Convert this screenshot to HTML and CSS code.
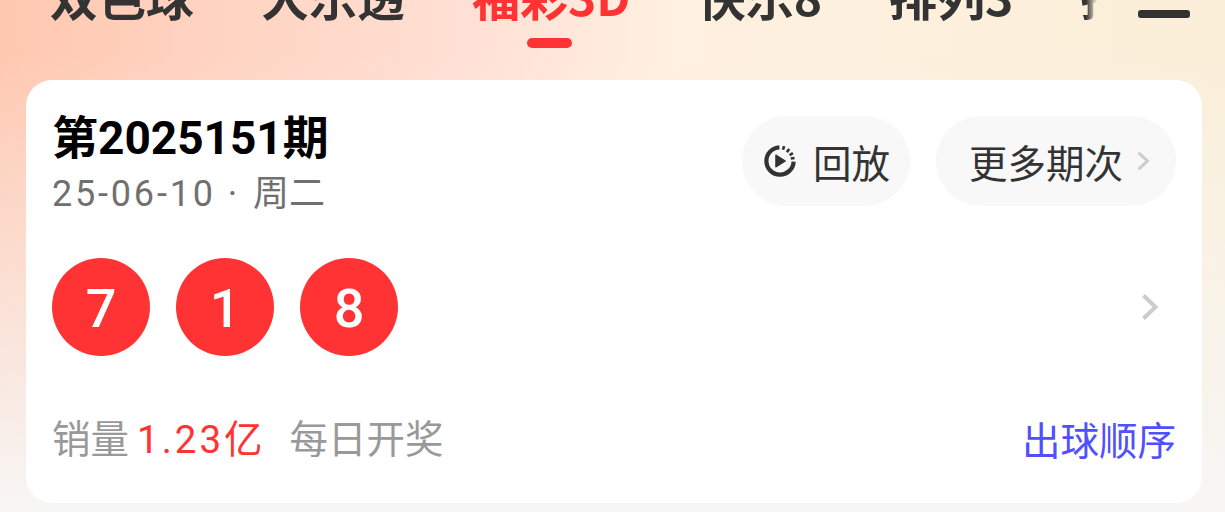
FILE: index.html
```html
<!DOCTYPE html>
<html lang="zh-CN">
<head>
  <meta charset="UTF-8" />
  <title>开奖</title>
  <link rel="stylesheet" href="styles.css">
</head>
<body>
  <div class="top">
    <div class="tabs">
      <span class="tab">双色球</span>
      <span class="tab">大乐透</span>
      <span class="tab active">福彩3D</span>
      <span class="tab">快乐8</span>
      <span class="tab">排列3</span>
      <span class="tab">排列5</span>
    </div>
    <div class="menu"><span class="menu-line"></span></div>
  </div>

  <div class="card">
    <div class="head">
      <div class="info">
        <div class="issue">第2025151期</div>
        <div class="date"><span class="nums">25-06-10</span><span class="dot">·</span>周二</div>
      </div>
      <div class="actions">
        <div class="pill replay">
          <svg class="replay-icon" viewBox="2.500 2.500 27 27" width="32" height="32">
            <path d="M15.500 4.500A11.500 11.500 0 1 0 27.500 16.500" fill="none" stroke="#333" stroke-width="3.600"/>
            <path d="M19.500 3.500l-1 3M23.800 5.800l-2 2.700M26.900 9.400l-2.800 1.600M28.300 13.500l-3.200 .4" fill="none" stroke="#333" stroke-width="2.200"/>
            <path d="M12.500 11l8 5-8 5z" fill="#333" stroke="#333" stroke-width="1" stroke-linejoin="round"/>
          </svg>
          <span>回放</span>
        </div>
        <div class="pill more">
          <span>更多期次</span>
          <svg viewBox="0 0 12 20" width="14" height="22"><path d="M2 2.500l8 7.500-8 7.500" fill="none" stroke="#ccc" stroke-width="2.800"/></svg>
        </div>
      </div>
    </div>

    <div class="balls-row">
      <div class="balls">
        <span class="ball">7</span>
        <span class="ball">1</span>
        <span class="ball">8</span>
      </div>
      <svg class="row-arrow" viewBox="0 0 18 28" width="18" height="28"><path d="M2.500 2.500l12 11.500-12 11.500" fill="none" stroke="#ccc" stroke-width="4"/></svg>
    </div>

    <div class="foot">
      <div class="stats">
        <span>销量<em class="sales"><span class="nums-sales">1.23</span>亿</em></span>
        <span>每日开奖</span>
      </div>
      <span class="order">出球顺序</span>
    </div>
  </div>
</body>
</html>
```

FILE: styles.css
```css
* {
  box-sizing: border-box;
}
html, body {
  height: 100%;
}
body {
  margin: 0;
  overflow: hidden;
  font-family: "Noto Sans CJK SC", "Noto Sans", sans-serif;
  color: #333;
  background:
    linear-gradient(180deg, rgba(247, 246, 245, 0) 0%, rgba(247, 246, 245, 0) 10%, #f7f6f5 100%),
    linear-gradient(90deg, #ffc8b0 0%, #ffe0d4 38%, #fff0e0 55%, #faefd8 100%);
}
.top {
  display: flex;
  justify-content: space-between;
  height: 80px;
  padding: 0 35px 0 50px;
}
.tabs {
  display: flex;
  width: 1047px;
  gap: 67px;
  overflow: hidden;
  height: 80px;
  -webkit-mask-image: linear-gradient(90deg, #000 1036px, transparent 1047px);
}
.tab {
  position: relative;
  flex: none;
  margin-top: -29px;
  font-size: 48px;
  line-height: 48px;
  height: 48px;
  font-weight: 700;
  white-space: nowrap;
}
.tab.active {
  color: #ff3333;
}
.tab.active::after {
  content: "";
  position: absolute;
  left: 55px;
  top: 67px;
  width: 45px;
  height: 10px;
  border-radius: 5px;
  background: #ff3333;
}
.menu {
  padding-top: 10px;
}
.menu-line {
  display: block;
  width: 52px;
  height: 8px;
  border-radius: 3px;
  background: #333;
}
.card {
  display: flex;
  flex-direction: column;
  margin: 0 23px 0 26px;
  height: 423px;
  padding: 30px 26px 0;
  background: #fff;
  border-radius: 26px;
}
.head {
  display: flex;
  justify-content: space-between;
}
.info {
  padding-top: 2px;
}
.issue {
  font-size: 46px;
  line-height: 52px;
  font-weight: 700;
  color: #000;
  font-family: Roboto, "Noto Sans CJK SC", sans-serif;
}
.date {
  margin-top: 8px;
  font-size: 36px;
  line-height: 44px;
  color: #707070;
  font-family: Roboto, "Noto Sans CJK SC", sans-serif;
}
.nums {
  letter-spacing: 2.800px;
}
.dot {
  margin: 0 16px 0 12px;
}
.actions {
  display: flex;
  gap: 26px;
  margin-top: 6px;
}
.pill {
  display: flex;
  align-items: center;
  height: 90px;
  border-radius: 45px;
  background: #f8f8f8;
  font-size: 38.500px;
  color: #333;
}
.replay {
  width: 168px;
  padding-left: 22px;
  gap: 17px;
}
.more {
  width: 240px;
  padding-left: 33px;
  gap: 13px;
}
.balls-row {
  display: flex;
  align-items: center;
  justify-content: space-between;
  margin-top: 42px;
  padding-right: 17px;
}
.balls {
  display: flex;
  gap: 26px;
}
.ball {
  display: flex;
  align-items: center;
  justify-content: center;
  width: 98px;
  height: 98px;
  padding-top: 2px;
  border-radius: 50%;
  background: #ff3333;
  color: #fff;
  font-family: Roboto, sans-serif;
  font-weight: 500;
  font-size: 54px;
}
.foot {
  display: flex;
  justify-content: space-between;
  align-items: center;
  margin-top: 56px;
  font-size: 38.500px;
  line-height: 48px;
}
.stats {
  display: flex;
  gap: 27px;
  color: #999;
}
.sales {
  margin-left: 8px;
  font-style: normal;
  color: #ff3333;
  font-family: Roboto, "Noto Sans CJK SC", sans-serif;
}
.nums-sales {
  letter-spacing: 3px;
}
.order {
  color: #5050ff;
}
```
